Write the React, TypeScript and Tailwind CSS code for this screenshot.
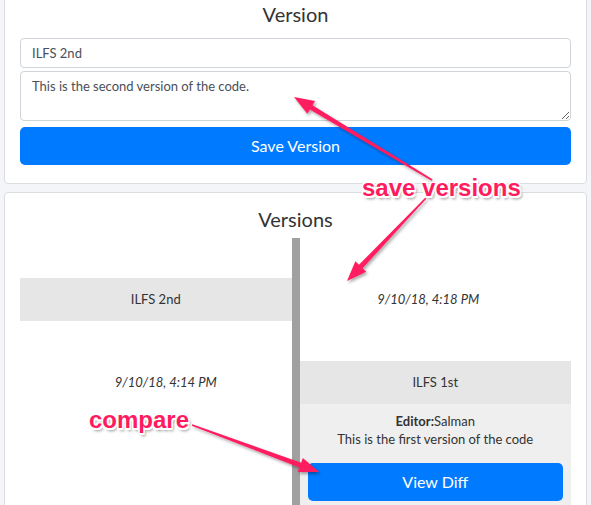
import React from 'react'

type Pt = [number, number]

// tapered arrow polygon: thin at tail, wider near the head
function arrowPoints(tail: Pt, tip: Pt, head = 20, headW = 15, w0 = 1.5, w1 = 5) {
  const dx = tip[0] - tail[0]
  const dy = tip[1] - tail[1]
  const len = Math.hypot(dx, dy)
  const ux = dx / len
  const uy = dy / len
  const nx = -uy
  const ny = ux
  const bx = tip[0] - ux * head
  const by = tip[1] - uy * head
  const pts: Pt[] = [
    [tail[0] + nx * w0 / 2, tail[1] + ny * w0 / 2],
    [bx + nx * w1 / 2, by + ny * w1 / 2],
    [bx + nx * headW / 2, by + ny * headW / 2],
    [tip[0], tip[1]],
    [bx - nx * headW / 2, by - ny * headW / 2],
    [bx - nx * w1 / 2, by - ny * w1 / 2],
    [tail[0] - nx * w0 / 2, tail[1] - ny * w0 / 2],
  ]
  return pts.map((p) => p.join(',')).join(' ')
}

const label =
  "absolute font-bold text-[24px] leading-none text-[#ff1b5e] font-['Liberation_Sans',Arial,sans-serif] [text-shadow:-1.5px_-1.5px_0_#fff,1.5px_-1.5px_0_#fff,-1.5px_1.5px_0_#fff,1.5px_1.5px_0_#fff,0_1.5px_0_#fff,2px_3px_3px_rgba(0,0,0,0.45)]"

export default function App() {
  return (
    <div className="relative w-[591px] h-[505px] overflow-hidden bg-[#f4f5f9] px-[4px] font-['Lato','Open_Sans',sans-serif] text-[#333]">
      {/* Version form */}
      <div className="-mt-[7px] bg-white border border-[#dcdde1] rounded-[4px] pt-[8px] px-[15px] pb-[18px]">
        <h2 className="text-center text-[20px] leading-[24px] text-[#333]">Version</h2>
        <input
          readOnly
          value="ILFS 2nd"
          className="mt-[12px] block w-full h-[30px] border border-[#ced4da] rounded-[4px] px-[11px] text-[13px] text-[#495057] outline-none"
        />
        <textarea
          readOnly
          value="This is the second version of the code."
          className="mt-[3px] block w-full h-[50px] border border-[#ced4da] rounded-[4px] px-[11px] pt-[5px] text-[13px] text-[#495057] outline-none"
        />
        <button className="mt-[6px] w-full h-[38px] rounded-[5px] bg-[#007bff] text-white text-[16px]">
          Save Version
        </button>
      </div>

      {/* Versions timeline */}
      <div className="mt-[8px] bg-white border border-[#dcdde1] rounded-[4px] pt-[14px] px-[15px] h-[400px]">
        <h2 className="text-center text-[20px] leading-[24px] text-[#333]">Versions</h2>
        <div className="mt-[7px] flex">
          <div className="flex-1 flex flex-col">
            <div className="mt-[40px] h-[43px] bg-[#e6e6e6] flex items-center justify-center text-[13px]">
              ILFS 2nd
            </div>
            <div className="mt-[40px] h-[43px] flex items-center justify-center pl-[20px] text-[13px] italic">
              9/10/18, 4:14 PM
            </div>
          </div>
          <div className="w-[8px] h-[300px] bg-[#a0a0a0]" />
          <div className="flex-1 flex flex-col">
            <div className="mt-[40px] h-[43px] flex items-center justify-center pr-[14px] text-[13px] italic">
              9/10/18, 4:18 PM
            </div>
            <div className="mt-[40px]">
              <div className="h-[43px] bg-[#e6e6e6] flex items-center justify-center text-[13px]">
                ILFS 1st
              </div>
              <div className="bg-[#efefef] pt-[8px] px-[8px] pb-[10px] text-center text-[13px] leading-[18px]">
                <div>
                  <span className="font-bold">Editor:</span>Salman
                </div>
                <div>This is the first version of the code</div>
                <button className="mt-[15px] w-full h-[38px] rounded-[5px] bg-[#007bff] text-white text-[16px]">
                  View Diff
                </button>
              </div>
            </div>
          </div>
        </div>
      </div>

      {/* annotations */}
      <svg className="absolute left-0 top-0 pointer-events-none" width="591" height="505">
        <defs>
          <filter id="sh" x="-20%" y="-20%" width="140%" height="140%">
            <feDropShadow dx="1.5" dy="2" stdDeviation="1.5" floodColor="#000" floodOpacity="0.35" />
          </filter>
        </defs>
        <g fill="#ff1b5e" filter="url(#sh)">
          <polygon points={arrowPoints([432, 180], [294, 97])} />
          <polygon points={arrowPoints([426, 198], [347, 281])} />
          <polygon points={arrowPoints([192, 425], [319, 472])} />
        </g>
      </svg>
      <div className={label} style={{ left: 362, top: 176 }}>save versions</div>
      <div className={label} style={{ left: 89, top: 408 }}>compare</div>
    </div>
  )
}
